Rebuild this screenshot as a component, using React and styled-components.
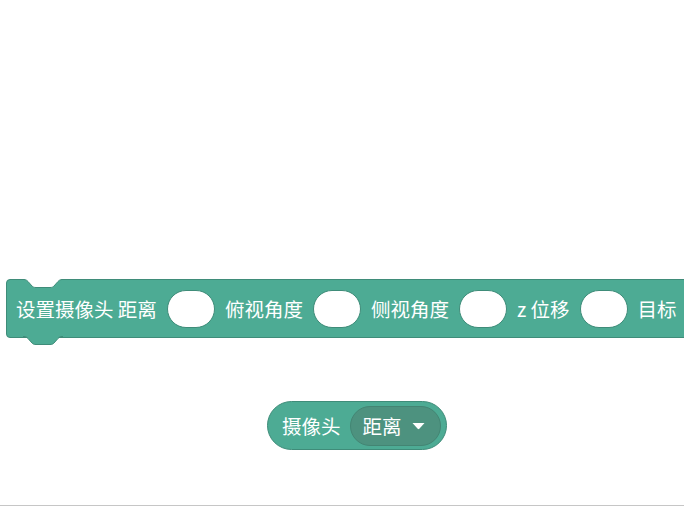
import React from "react";
import styled, { createGlobalStyle } from "styled-components";

const GlobalStyle = createGlobalStyle`
  html, body {
    margin: 0;
    padding: 0;
    background: #ffffff;
  }
  body {
    font-family: "Noto Sans CJK SC", "Noto Sans", sans-serif;
    overflow: hidden;
  }
`;

const FILL = "#4dab94";
const EDGE = "#3f8c79";

const Page = styled.div`
  height: 506px;
  box-sizing: border-box;
  border-bottom: 1px solid #c6c6c6;
  display: flex;
  flex-direction: column;
  align-items: flex-start;
  overflow: hidden;
`;

const StackBlock = styled.div`
  position: relative;
  margin-top: 279px;
  margin-left: 6px;
  height: 59px;
  box-sizing: border-box;
  padding: 0 14px 0 9px;
  display: flex;
  align-items: center;
  gap: 10px;
  background: ${FILL};
  border: 1px solid ${EDGE};
  border-radius: 4px;
  white-space: nowrap;
  flex-shrink: 0;
`;

const Notch = styled.svg`
  position: absolute;
  left: 16px;
  top: -1px;
  width: 40px;
  height: 10px;
  overflow: visible;
`;

const Tab = styled.svg`
  position: absolute;
  left: 16px;
  top: calc(100% - 1px);
  width: 40px;
  height: 10px;
  overflow: visible;
`;

const Label = styled.span`
  color: #ffffff;
  font-size: 19.5px;
  line-height: 1;
  white-space: pre;
`;

const Slot = styled.div`
  width: 48px;
  height: 38px;
  box-sizing: border-box;
  background: #ffffff;
  border: 1px solid ${EDGE};
  border-radius: 19px;
  flex-shrink: 0;
`;

const Reporter = styled.div`
  margin-top: 63px;
  margin-left: 267px;
  height: 49px;
  box-sizing: border-box;
  padding: 0 5px 0 14px;
  display: flex;
  align-items: center;
  gap: 9px;
  background: ${FILL};
  border: 1px solid ${EDGE};
  border-radius: 25px;
`;

const Dropdown = styled.div`
  height: 40px;
  width: 91px;
  box-sizing: border-box;
  padding: 0 15px 0 12px;
  display: flex;
  align-items: center;
  justify-content: space-between;
  background: #4d927f;
  border: 1px solid #438573;
  border-radius: 20px;
`;

const curve =
  "M0 0.5 h1 c2 0 3 1 4 2 l4 4.5 c1 1 2 1.5 4 1.5 h14 c2 0 3 -0.5 4 -1.5 l4 -4.5 c1 -1 2 -2 4 -2 h1";

function TopNotch() {
  return (
    <Notch viewBox="0 0 40 10">
      <path d={`${curve} V0 H0 Z`} fill="#ffffff" />
      <path d={curve} fill="none" stroke={EDGE} strokeWidth="1" />
    </Notch>
  );
}

function BottomTab() {
  return (
    <Tab viewBox="0 0 40 10">
      <path d={`M0 0 ${curve.slice(1)} V0 Z`} fill={FILL} />
      <path d={curve} fill="none" stroke={EDGE} strokeWidth="1" />
    </Tab>
  );
}

export default function App() {
  return (
    <>
      <GlobalStyle />
      <Page>
        <StackBlock>
          <TopNotch />
          <BottomTab />
          <Label>设置摄像头 距离</Label>
          <Slot />
          <Label>俯视角度</Label>
          <Slot />
          <Label>侧视角度</Label>
          <Slot />
          <Label>z 位移</Label>
          <Slot />
          <Label>目标</Label>
          <Slot />
        </StackBlock>
        <Reporter>
          <Label>摄像头</Label>
          <Dropdown>
            <Label>距离</Label>
            <svg width="13" height="8" viewBox="0 0 13 8">
              <path d="M0.5 1 H12.5 L7.3 6.8 Q6.5 7.6 5.7 6.8 Z" fill="#ffffff" />
            </svg>
          </Dropdown>
        </Reporter>
      </Page>
    </>
  );
}
